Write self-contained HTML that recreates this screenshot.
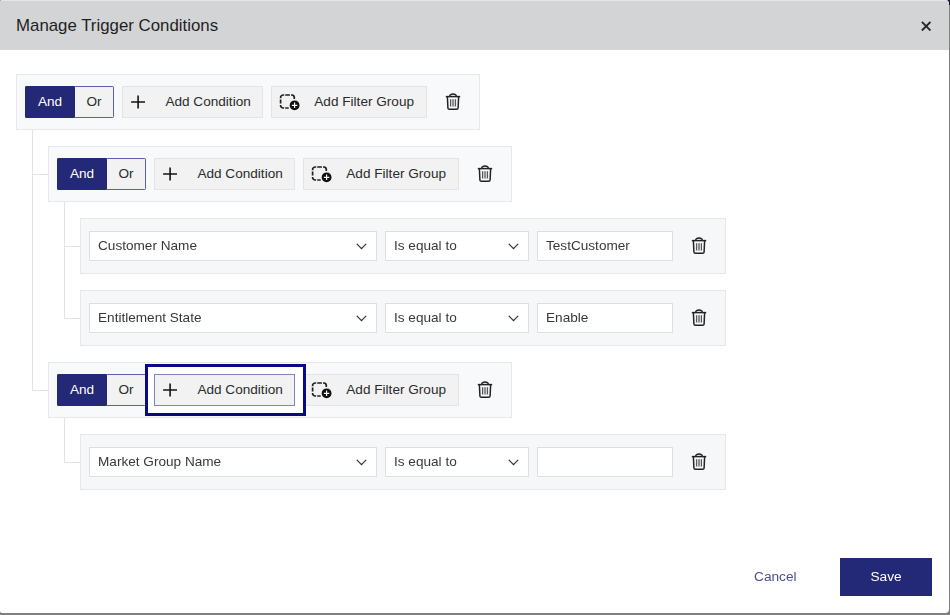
<!DOCTYPE html>
<html>
<head>
<meta charset="utf-8">
<title>Manage Trigger Conditions</title>
<style>
*{box-sizing:border-box;margin:0;padding:0}
html,body{width:950px;height:615px;overflow:hidden;background:#808080;font-family:"Liberation Sans",sans-serif;font-size:13.6px;color:#2b2b2b}
.corner{position:absolute;width:4px;height:4px;background:#0a1a3f}
.modal{position:absolute;left:0;top:0;width:949px;height:613px;background:#fff;border-radius:2px 4px 4px 2px;overflow:hidden}
.hdr{position:absolute;left:0;top:0;width:949px;height:50px;background:#d3d4d6;border-top:1px solid #e5e6e7}
.title{position:absolute;left:16px;top:15px;font-size:16.2px;line-height:20px;color:#1f1f1f;white-space:nowrap;transform:scaleX(1.04);transform-origin:0 0}
.close{position:absolute;left:920.55px;top:20.5px;width:10.4px;height:10.4px}
.grp{position:absolute;width:464px;height:56px;background:#f8f9fb;border:1px solid #e7e8eb}
.cnd{position:absolute;width:646px;height:56px;background:#f6f7f9;border:1px solid #e7e8eb}
.and{position:absolute;left:8px;top:11px;width:50px;height:32px;background:#232877;color:#fff;text-align:center;line-height:30px;border:1px solid #232877;border-radius:1px 0 0 1px}
.or{position:absolute;left:58px;top:11px;width:39px;height:32px;background:#f2f2f2;color:#2b2b2b;text-align:center;line-height:30px;border:1px solid #5d60a6;border-left:none;border-radius:0 2px 2px 0}
.btn{position:absolute;top:11px;height:32px;background:#f2f2f2;border:1px solid #e4e4e6;line-height:30px;white-space:nowrap;color:#2b2b2b}
.btn.ac{left:105px;width:141px}
.btn.fg{left:254px;width:156px}
.btn span{position:absolute;top:0}
.btn.ac span{left:42.4px}
.btn.fg span{left:42.3px}
.btn svg{position:absolute}
.trash{position:absolute;width:16px;height:18px}
.sel,.inp{position:absolute;top:12px;height:30px;background:#fff;border:1px solid #dddee1;line-height:28px;padding-left:8px;white-space:nowrap;color:#383838}
.s1{left:8px;width:288px}
.s2{left:304px;width:144px}
.inp{left:456px;width:136px}
.sel,.inp,.cancel,.save{will-change:transform}
.chev{position:absolute;right:9px;top:11px;width:11px;height:7px}
.vl{position:absolute;width:1px;background:#e2e3e6}
.hl{position:absolute;height:1px;background:#e2e3e6}
.focus{position:absolute;left:145px;top:364px;width:161px;height:52px;border:3px solid #08088a;background:#fff}
.cancel{position:absolute;left:754px;top:569px;color:#4a4f9b;font-size:13.7px;line-height:16px}
.save{position:absolute;left:840px;top:558px;width:92px;height:38px;background:#232877;color:#fff;text-align:center;line-height:37px;font-size:13.7px}
</style>
</head>
<body>
<div class="corner" style="left:0;top:0;width:2px;height:2px"></div>
<div class="corner" style="left:945px;top:0;width:5px;height:5px"></div>
<div class="modal">
  <div class="hdr"></div>
  <div class="title">Manage Trigger Conditions</div>
  <svg class="close" viewBox="0 0 10.4 10.4"><path d="M0.9 0.9L9.5 9.5M9.5 0.9L0.9 9.5" stroke="#262626" stroke-width="1.9" fill="none"/></svg>

  <!-- tree lines -->
  <div class="vl" style="left:32px;top:130px;height:261px"></div>
  <div class="hl" style="left:32px;top:174px;width:16px"></div>
  <div class="hl" style="left:32px;top:390px;width:16px"></div>
  <div class="vl" style="left:64px;top:202px;height:117px"></div>
  <div class="hl" style="left:64px;top:246px;width:16px"></div>
  <div class="hl" style="left:64px;top:318px;width:16px"></div>
  <div class="vl" style="left:64px;top:418px;height:45px"></div>
  <div class="hl" style="left:64px;top:462px;width:16px"></div>

  <!-- group 1 -->
  <div class="grp" style="left:16px;top:74px">
    <div class="and">And</div><div class="or">Or</div>
    <div class="btn ac"><svg style="left:8px;top:7.6px" width="14" height="14" viewBox="0 0 14 14"><path d="M7.1 0.4V13.6M0.1 7H14" stroke="#141414" stroke-width="1.6"/></svg><span>Add Condition</span></div>
    <div class="btn fg"><svg style="left:7px;top:6px" width="22" height="20" viewBox="0 0 22 20"><path d="M1.6 5.2V4.6A2.6 2.6 0 0 1 4.2 2H5.2M6.2 2H10.9M12 2H12.7A2.6 2.6 0 0 1 15.3 4.6V5.9M1.6 6.6V10.5M1.6 11.9V12.4A2.6 2.6 0 0 0 4.2 15H5.1M6.2 15H9.7" fill="none" stroke="#20202a" stroke-width="1.7"/><circle cx="15.6" cy="12.3" r="5.7" fill="#f2f2f2"/><circle cx="15.6" cy="12.3" r="4.9" fill="#111"/><path d="M12.9 12.3H18.3M15.6 9.6V15" stroke="#fff" stroke-width="1.15"/></svg><span>Add Filter Group</span></div>
    <svg class="trash" style="left:428px;top:18px" viewBox="0 0 16 18"><path d="M0.8 3.6H15.2" stroke="#222" stroke-width="1.5" fill="none"/><path d="M4.6 3.4C4.6 0.2 11.4 0.2 11.4 3.4" stroke="#222" stroke-width="1.4" fill="none"/><path d="M2.4 4L2.9 15Q3 16.3 4.4 16.3H11.6Q13 16.3 13.1 15L13.6 4" stroke="#222" stroke-width="1.5" fill="none"/><rect x="5.5" y="6.2" width="5" height="7.2" fill="#d6d6d6"/><path d="M5.5 6.2V13.4M8 6.2V13.4M10.5 6.2V13.4" stroke="#555" stroke-width="1.1"/></svg>
  </div>

  <!-- group 2 -->
  <div class="grp" style="left:48px;top:146px">
    <div class="and">And</div><div class="or">Or</div>
    <div class="btn ac"><svg style="left:8px;top:7.6px" width="14" height="14" viewBox="0 0 14 14"><path d="M7.1 0.4V13.6M0.1 7H14" stroke="#141414" stroke-width="1.6"/></svg><span>Add Condition</span></div>
    <div class="btn fg"><svg style="left:7px;top:6px" width="22" height="20" viewBox="0 0 22 20"><path d="M1.6 5.2V4.6A2.6 2.6 0 0 1 4.2 2H5.2M6.2 2H10.9M12 2H12.7A2.6 2.6 0 0 1 15.3 4.6V5.9M1.6 6.6V10.5M1.6 11.9V12.4A2.6 2.6 0 0 0 4.2 15H5.1M6.2 15H9.7" fill="none" stroke="#20202a" stroke-width="1.7"/><circle cx="15.6" cy="12.3" r="5.7" fill="#f2f2f2"/><circle cx="15.6" cy="12.3" r="4.9" fill="#111"/><path d="M12.9 12.3H18.3M15.6 9.6V15" stroke="#fff" stroke-width="1.15"/></svg><span>Add Filter Group</span></div>
    <svg class="trash" style="left:428px;top:18px" viewBox="0 0 16 18"><path d="M0.8 3.6H15.2" stroke="#222" stroke-width="1.5" fill="none"/><path d="M4.6 3.4C4.6 0.2 11.4 0.2 11.4 3.4" stroke="#222" stroke-width="1.4" fill="none"/><path d="M2.4 4L2.9 15Q3 16.3 4.4 16.3H11.6Q13 16.3 13.1 15L13.6 4" stroke="#222" stroke-width="1.5" fill="none"/><rect x="5.5" y="6.2" width="5" height="7.2" fill="#d6d6d6"/><path d="M5.5 6.2V13.4M8 6.2V13.4M10.5 6.2V13.4" stroke="#555" stroke-width="1.1"/></svg>
  </div>

  <!-- condition 1 -->
  <div class="cnd" style="left:80px;top:218px">
    <div class="sel s1">Customer Name<svg class="chev" viewBox="0 0 11 7"><path d="M0.8 0.8L5.5 5.6L10.2 0.8" stroke="#333" stroke-width="1.15" fill="none"/></svg></div>
    <div class="sel s2">Is equal to<svg class="chev" viewBox="0 0 11 7"><path d="M0.8 0.8L5.5 5.6L10.2 0.8" stroke="#333" stroke-width="1.15" fill="none"/></svg></div>
    <div class="inp">TestCustomer</div>
    <svg class="trash" style="left:610px;top:18px" viewBox="0 0 16 18"><path d="M0.8 3.6H15.2" stroke="#222" stroke-width="1.5" fill="none"/><path d="M4.6 3.4C4.6 0.2 11.4 0.2 11.4 3.4" stroke="#222" stroke-width="1.4" fill="none"/><path d="M2.4 4L2.9 15Q3 16.3 4.4 16.3H11.6Q13 16.3 13.1 15L13.6 4" stroke="#222" stroke-width="1.5" fill="none"/><rect x="5.5" y="6.2" width="5" height="7.2" fill="#d6d6d6"/><path d="M5.5 6.2V13.4M8 6.2V13.4M10.5 6.2V13.4" stroke="#555" stroke-width="1.1"/></svg>
  </div>

  <!-- condition 2 -->
  <div class="cnd" style="left:80px;top:290px">
    <div class="sel s1">Entitlement State<svg class="chev" viewBox="0 0 11 7"><path d="M0.8 0.8L5.5 5.6L10.2 0.8" stroke="#333" stroke-width="1.15" fill="none"/></svg></div>
    <div class="sel s2">Is equal to<svg class="chev" viewBox="0 0 11 7"><path d="M0.8 0.8L5.5 5.6L10.2 0.8" stroke="#333" stroke-width="1.15" fill="none"/></svg></div>
    <div class="inp">Enable</div>
    <svg class="trash" style="left:610px;top:18px" viewBox="0 0 16 18"><path d="M0.8 3.6H15.2" stroke="#222" stroke-width="1.5" fill="none"/><path d="M4.6 3.4C4.6 0.2 11.4 0.2 11.4 3.4" stroke="#222" stroke-width="1.4" fill="none"/><path d="M2.4 4L2.9 15Q3 16.3 4.4 16.3H11.6Q13 16.3 13.1 15L13.6 4" stroke="#222" stroke-width="1.5" fill="none"/><rect x="5.5" y="6.2" width="5" height="7.2" fill="#d6d6d6"/><path d="M5.5 6.2V13.4M8 6.2V13.4M10.5 6.2V13.4" stroke="#555" stroke-width="1.1"/></svg>
  </div>

  <!-- group 3 -->
  <div class="grp" style="left:48px;top:362px">
    <div class="and">And</div><div class="or">Or</div>
    <div class="btn fg"><svg style="left:7px;top:6px" width="22" height="20" viewBox="0 0 22 20"><path d="M1.6 5.2V4.6A2.6 2.6 0 0 1 4.2 2H5.2M6.2 2H10.9M12 2H12.7A2.6 2.6 0 0 1 15.3 4.6V5.9M1.6 6.6V10.5M1.6 11.9V12.4A2.6 2.6 0 0 0 4.2 15H5.1M6.2 15H9.7" fill="none" stroke="#20202a" stroke-width="1.7"/><circle cx="15.6" cy="12.3" r="5.7" fill="#f2f2f2"/><circle cx="15.6" cy="12.3" r="4.9" fill="#111"/><path d="M12.9 12.3H18.3M15.6 9.6V15" stroke="#fff" stroke-width="1.15"/></svg><span>Add Filter Group</span></div>
    <svg class="trash" style="left:428px;top:18px" viewBox="0 0 16 18"><path d="M0.8 3.6H15.2" stroke="#222" stroke-width="1.5" fill="none"/><path d="M4.6 3.4C4.6 0.2 11.4 0.2 11.4 3.4" stroke="#222" stroke-width="1.4" fill="none"/><path d="M2.4 4L2.9 15Q3 16.3 4.4 16.3H11.6Q13 16.3 13.1 15L13.6 4" stroke="#222" stroke-width="1.5" fill="none"/><rect x="5.5" y="6.2" width="5" height="7.2" fill="#d6d6d6"/><path d="M5.5 6.2V13.4M8 6.2V13.4M10.5 6.2V13.4" stroke="#555" stroke-width="1.1"/></svg>
  </div>
  <div class="focus"></div>
  <div class="btn ac" style="left:154px;top:374px;border-color:#8084bd"><svg style="left:8px;top:7.6px" width="14" height="14" viewBox="0 0 14 14"><path d="M7.1 0.4V13.6M0.1 7H14" stroke="#141414" stroke-width="1.6"/></svg><span>Add Condition</span></div>

  <!-- condition 3 -->
  <div class="cnd" style="left:80px;top:434px">
    <div class="sel s1">Market Group Name<svg class="chev" viewBox="0 0 11 7"><path d="M0.8 0.8L5.5 5.6L10.2 0.8" stroke="#333" stroke-width="1.15" fill="none"/></svg></div>
    <div class="sel s2">Is equal to<svg class="chev" viewBox="0 0 11 7"><path d="M0.8 0.8L5.5 5.6L10.2 0.8" stroke="#333" stroke-width="1.15" fill="none"/></svg></div>
    <div class="inp"></div>
    <svg class="trash" style="left:610px;top:18px" viewBox="0 0 16 18"><path d="M0.8 3.6H15.2" stroke="#222" stroke-width="1.5" fill="none"/><path d="M4.6 3.4C4.6 0.2 11.4 0.2 11.4 3.4" stroke="#222" stroke-width="1.4" fill="none"/><path d="M2.4 4L2.9 15Q3 16.3 4.4 16.3H11.6Q13 16.3 13.1 15L13.6 4" stroke="#222" stroke-width="1.5" fill="none"/><rect x="5.5" y="6.2" width="5" height="7.2" fill="#d6d6d6"/><path d="M5.5 6.2V13.4M8 6.2V13.4M10.5 6.2V13.4" stroke="#555" stroke-width="1.1"/></svg>
  </div>

  <div class="cancel">Cancel</div>
  <div class="save">Save</div>
</div>
</body>
</html>
